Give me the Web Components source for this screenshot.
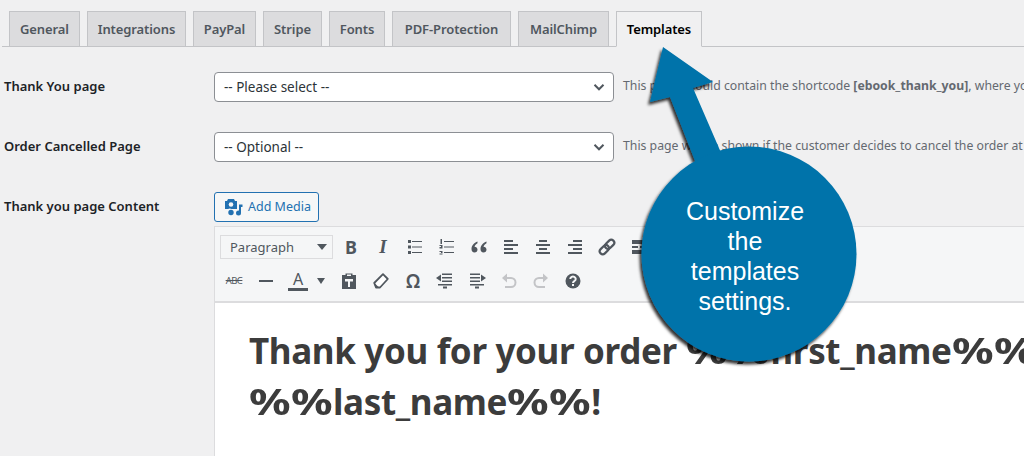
<!DOCTYPE html>
<html lang="en">
<head>
<meta charset="utf-8">
<title>Templates settings</title>
<style>
  html, body { margin: 0; padding: 0; height: 456px; overflow: hidden; background: #f0f0f1; }
  body { position: relative; font-family: "Noto Sans", "Open Sans", sans-serif; font-size: 13px; color: #3c434a; }
</style>
</head>
<body>
<settings-page>
  <wp-tabs>
    <wp-tab style="width:71px">General</wp-tab>
    <wp-tab style="width:99px">Integrations</wp-tab>
    <wp-tab style="width:63px">PayPal</wp-tab>
    <wp-tab style="width:59px">Stripe</wp-tab>
    <wp-tab style="width:56px">Fonts</wp-tab>
    <wp-tab style="width:119px">PDF-Protection</wp-tab>
    <wp-tab style="width:91px">MailChimp</wp-tab>
    <wp-tab style="width:86px" active>Templates</wp-tab>
  </wp-tabs>
  <form-row label="Thank You page">
    <wp-select>-- Please select --</wp-select>
    <span slot="desc">This page should contain the shortcode <b>[ebook_thank_you]</b>, where you want the thank you message to show up for buyers</span>
  </form-row>
  <form-row label="Order Cancelled Page">
    <wp-select>-- Optional --</wp-select>
    <span slot="desc">This page will be shown if the customer decides to cancel the order at the checkout screen of the payment page</span>
  </form-row>
  <form-row label="Thank you page Content" class="media">
    <media-button>Add Media</media-button>
  </form-row>
  <wp-editor>
    Thank you for your order <span class="pc">%</span><span class="pc">%</span>first_name<span class="pc">%</span><span class="pc">%</span><br><span class="pc">%</span><span class="pc">%</span>last_name<span class="pc">%</span><span class="pc">%</span>!
  </wp-editor>
</settings-page>
<call-out>Customize the templates settings.</call-out>

<script>
  // small helper, every element gets an open shadow root from a string
  function shadow(el, html) {
    el.attachShadow({ mode: 'open' }).innerHTML = html;
  }

  class SettingsPage extends HTMLElement {
    constructor() {
      super();
      shadow(this, `<style>:host{display:block;width:1024px;height:456px;overflow:hidden;padding-top:11px;box-sizing:border-box}</style><slot></slot>`);
    }
  }

  class WpTabs extends HTMLElement {
    constructor() {
      super();
      shadow(this, `<style>
        :host{display:flex;gap:7px;height:35px;margin:0 0 -5px 2px;padding-left:7px;border-bottom:1px solid #c3c4c7}
      </style><slot></slot>`);
    }
  }

  class WpTab extends HTMLElement {
    constructor() {
      super();
      shadow(this, `<style>
        :host{display:block;box-sizing:border-box;height:36px;text-align:center;border:1px solid #c3c4c7;
          background:#dcdcde;color:#50575e;font:600 13px/34px "Noto Sans",sans-serif;letter-spacing:-.1px;white-space:nowrap}
        :host([active]){background:#f0f0f1;border-bottom-color:#f0f0f1;color:#000}
      </style><slot></slot>`);
    }
  }

  class FormRow extends HTMLElement {
    constructor() {
      super();
      shadow(this, `<style>
        :host{display:grid;grid-template-columns:210px 400px 1fr;align-items:center;height:30px;padding-left:4px;margin-top:30px;white-space:nowrap}
        :host(.media){margin-bottom:4px}
        .label{font:600 13px/20px "Noto Sans",sans-serif;color:#1d2327;margin-top:-2px}
        .desc{margin-left:9px;font:12.25px/20px "Noto Sans",sans-serif;color:#646970;margin-top:-2px}
      </style>
      <div class="label"></div><div><slot></slot></div><div class="desc"><slot name="desc"></slot></div>`);
      this.shadowRoot.querySelector('.label').textContent = this.getAttribute('label');
    }
  }

  class WpSelect extends HTMLElement {
    constructor() {
      super();
      shadow(this, `<style>
        :host{display:flex;box-sizing:border-box;align-items:center;justify-content:space-between;width:400px;height:30px;
          padding:0 7px 0 9px;background:#fff;border:1px solid #8c8f94;border-radius:4px;color:#2c3338;font:13.5px/28px "Noto Sans",sans-serif}
        svg{display:block}
      </style><slot></slot>
      <svg width="14" height="14" viewBox="0 0 14 14"><path d="M2.500 4.800 7 9.300 11.500 4.800" fill="none" stroke="#50575e" stroke-width="2"/></svg>`);
    }
  }

  class MediaButton extends HTMLElement {
    constructor() {
      super();
      shadow(this, `<style>
        :host{display:flex;box-sizing:border-box;align-items:center;gap:5px;width:105px;height:30px;padding-left:9px;
          background:#f6f7f7;border:1px solid #2271b1;border-radius:3px;color:#2271b1;font:12.5px/28px "Noto Sans",sans-serif}
        svg{display:block;flex:none}
      </style>
      <svg width="19" height="18" viewBox="0 0 19 18" fill="#2271b1">
        <path d="M4 1h6l1 2h2v8H7.500A3.500 3.500 0 0 0 4 11H1V3h2z"/><circle cx="7" cy="6.500" r="2.300" fill="#f6f7f7"/>
        <circle cx="7" cy="14.500" r="2.700"/><circle cx="14.500" cy="15" r="2.500"/>
        <path d="M15 15V6.500h3.500v2.500H17v6z"/>
      </svg><slot></slot>`);
    }
  }

  class WpEditor extends HTMLElement {
    constructor() {
      super();
      shadow(this, `<style>
        :host{display:block;margin-left:214px;height:230px;box-sizing:border-box;border-left:1px solid #dcdcde;background:#fff}
        .bar{box-sizing:border-box;height:77px;padding:3px 0 0 3px;background:#f5f6f7;border-top:1px solid #dcdcde;border-bottom:2px solid #dcdcde}
        .row{display:flex;height:34px;align-items:center}
        .format{box-sizing:border-box;display:flex;align-items:center;justify-content:space-between;width:113px;height:24px;margin:0 2px;padding:0 5px 0 9px;
          background:#f5f6f7;border:1px solid #dcdcde;font:13px/22px "Noto Sans",sans-serif;color:#50575e}
        .format i{border:5px solid transparent;border-top:6px solid #50575e;border-bottom:0}
        .color{display:flex;align-items:center;width:51px}
        .color i{border:4.500px solid transparent;border-top:6px solid #50575e;border-bottom:0;margin-left:3px}
        .text{white-space:nowrap;padding:22px 0 0 34px;font:700 35px/51px "Noto Sans",sans-serif;color:#3c3c3c;letter-spacing:-.35px}
        /* the percent signs are much wider in the reference font */
        ::slotted(.pc){display:inline-block;width:42px;transform:scaleX(1.32);transform-origin:0 50%}
      </style>
      <div class="bar">
        <div class="row">
          <div class="format">Paragraph<i></i></div>
          <tool-icon name="bold"></tool-icon><tool-icon name="italic"></tool-icon><tool-icon name="ul"></tool-icon>
          <tool-icon name="ol"></tool-icon><tool-icon name="quote"></tool-icon><tool-icon name="left"></tool-icon>
          <tool-icon name="center"></tool-icon><tool-icon name="right"></tool-icon><tool-icon name="link"></tool-icon>
          <tool-icon name="more"></tool-icon>
        </div>
        <div class="row">
          <tool-icon name="abc"></tool-icon><tool-icon name="hr"></tool-icon>
          <div class="color"><tool-icon name="color"></tool-icon><i></i></div>
          <tool-icon name="paste"></tool-icon><tool-icon name="eraser"></tool-icon><tool-icon name="omega"></tool-icon>
          <tool-icon name="outdent"></tool-icon><tool-icon name="indent"></tool-icon><tool-icon name="undo"></tool-icon>
          <tool-icon name="redo"></tool-icon><tool-icon name="help"></tool-icon>
        </div>
      </div>
      <div class="text"><slot></slot></div>`);
    }
  }

  const lines = (rows) => rows.map(r => `<rect x="${r[0]}" y="${r[1]}" width="${r[2]}" height="${r[3] || 2}"/>`).join('');
  const svg = (body, extra) => `<svg width="20" height="20" viewBox="0 0 20 20" fill="#50575e" ${extra || ''}>${body}</svg>`;
  const listLines = lines([[7, 4, 10, 1], [7, 9.500, 10, 1], [7, 15, 10, 1]]);

  const ICONS = {
    bold: `<span style="font:700 18px/20px 'Noto Sans',sans-serif">B</span>`,
    italic: `<span style="font:italic 700 19px/20px 'Liberation Serif',serif">I</span>`,
    ul: svg(lines([[3, 3, 3, 3], [3, 8.500, 3, 3], [3, 14, 3, 3]]) + listLines),
    ol: svg(lines([[3.500, 2, 1.500, 5], [2.500, 8, 3, 1], [4, 9, 1.500, 1], [2.500, 10, 3, 1.500], [2.500, 14, 3, 1], [4, 15, 1.500, 1], [2.500, 16.500, 3, 1]]) + listLines),
    quote: svg(`<path d="M8.500 4.500C5 6 2.500 8.500 2.500 12c0 2 1.200 3.500 3 3.500s3-1.300 3-3-1.300-2.800-3-2.800c.4-1.500 1.500-2.700 3-3.500zM17.500 4.500C14 6 11.500 8.500 11.500 12c0 2 1.200 3.500 3 3.500s3-1.300 3-3-1.300-2.800-3-2.800c.4-1.500 1.500-2.700 3-3.500z"/>`),
    left: svg(lines([[3, 3, 9], [3, 7, 14], [3, 11, 9], [3, 15, 14]])),
    center: svg(lines([[6, 3, 8], [3, 7, 14], [6, 11, 8], [3, 15, 14]])),
    right: svg(lines([[8, 3, 9], [3, 7, 14], [8, 11, 9], [3, 15, 14]])),
    link: svg(`<g fill="none" stroke="#50575e" stroke-width="2.200" transform="rotate(-45 10 10)"><rect x="1" y="7" width="10.500" height="6" rx="3"/><rect x="8.500" y="7" width="10.500" height="6" rx="3"/></g>`),
    more: svg(lines([[3, 3, 14, 4], [3, 9, 6, 2], [11, 9, 6, 2], [3, 13, 14, 4]])),
    abc: `<span style="font:9.500px/20px 'Noto Sans',sans-serif;text-decoration:line-through;letter-spacing:-.5px">ABC</span>`,
    hr: svg(lines([[3, 9, 14]])),
    color: `<span style="display:block;width:20px;text-align:center;font:16px/17px 'Noto Sans',sans-serif;border-bottom:3px solid #50575e">A</span>`,
    paste: svg(`<path d="M3 4h3.500V2.500h7V4H17v14H3zM8 3.500V5h4V3.500z"/><path d="M6 8h8v2.500h-3V16H9v-5.500H6z" fill="#f5f6f7"/>`),
    eraser: svg(`<path d="M12 3.200 16.800 8 9 16.500 5 16.500 3.200 12z" fill="#fff" stroke="#50575e" stroke-width="1.800" stroke-linejoin="round"/><path d="M4 12.500 8 16.500 5 17 3 12.500z"/>`),
    omega: `<span style="font:600 19px/20px 'Noto Sans',sans-serif">Ω</span>`,
    outdent: svg(`<path d="M1 7l5-3.500v7z"/>` + lines([[7, 2.500, 10, 1.500], [7, 6, 10, 1.500], [7, 9.500, 10, 1.500], [3, 13, 14, 1.500], [8, 15.500, 4, 2]])),
    indent: svg(`<path d="M19 7l-5-3.500v7z"/>` + lines([[3, 2.500, 10, 1.500], [3, 6, 10, 1.500], [3, 9.500, 10, 1.500], [3, 13, 14, 1.500], [8, 15.500, 4, 2]])),
    undo: svg(`<path d="M3 7l5-4.500v9z" fill="#c3c4c7"/><path d="M7 7h5a4.500 4.500 0 0 1 0 9H6" fill="none" stroke="#c3c4c7" stroke-width="2"/>`),
    redo: svg(`<path d="M17 7l-5-4.500v9z" fill="#c3c4c7"/><path d="M13 7H8a4.500 4.500 0 0 0 0 9h6" fill="none" stroke="#c3c4c7" stroke-width="2"/>`),
    help: svg(`<circle cx="10" cy="10" r="7.500"/><path d="M7.300 8a2.700 2.400 0 1 1 4.200 2c-1 .7-1.500 1-1.500 2" fill="none" stroke="#f5f6f7" stroke-width="2"/><rect x="9" y="13" width="2" height="2" fill="#f5f6f7"/>`)
  };

  class ToolIcon extends HTMLElement {
    constructor() {
      super();
      shadow(this, `<style>
        :host{display:flex;align-items:center;justify-content:center;width:32px;height:30px;flex:none;color:#50575e}
        svg{display:block}
      </style>${ICONS[this.getAttribute('name')] || ''}`);
    }
  }

  class CallOut extends HTMLElement {
    constructor() {
      super();
      shadow(this, `<style>
        :host{position:absolute;left:0;top:0;width:1024px;height:456px;pointer-events:none}
        svg{position:absolute;left:0;top:0}
        .text{position:absolute;left:680px;top:196px;width:130px;text-align:center;color:#fff;font:25px/30px "Liberation Sans",Arial,sans-serif}
      </style>
      <svg width="1024" height="456" viewBox="0 0 1024 456">
        <defs><filter id="sh" x="-20%" y="-20%" width="140%" height="140%"><feDropShadow dx="-2" dy="3" stdDeviation="1.800" flood-color="#000" flood-opacity=".8"/></filter></defs>
        <g fill="#0073aa" filter="url(#sh)">
          <path d="M663 47 713 82 693 88 722 155 697 166 670 97 650 102z"/>
          <circle cx="749" cy="254" r="107.500"/>
        </g>
      </svg>
      <div class="text"><slot></slot></div>`);
    }
  }

  customElements.define('settings-page', SettingsPage);
  customElements.define('wp-tabs', WpTabs);
  customElements.define('wp-tab', WpTab);
  customElements.define('form-row', FormRow);
  customElements.define('wp-select', WpSelect);
  customElements.define('media-button', MediaButton);
  customElements.define('tool-icon', ToolIcon);
  customElements.define('wp-editor', WpEditor);
  customElements.define('call-out', CallOut);
</script>
</body>
</html>
